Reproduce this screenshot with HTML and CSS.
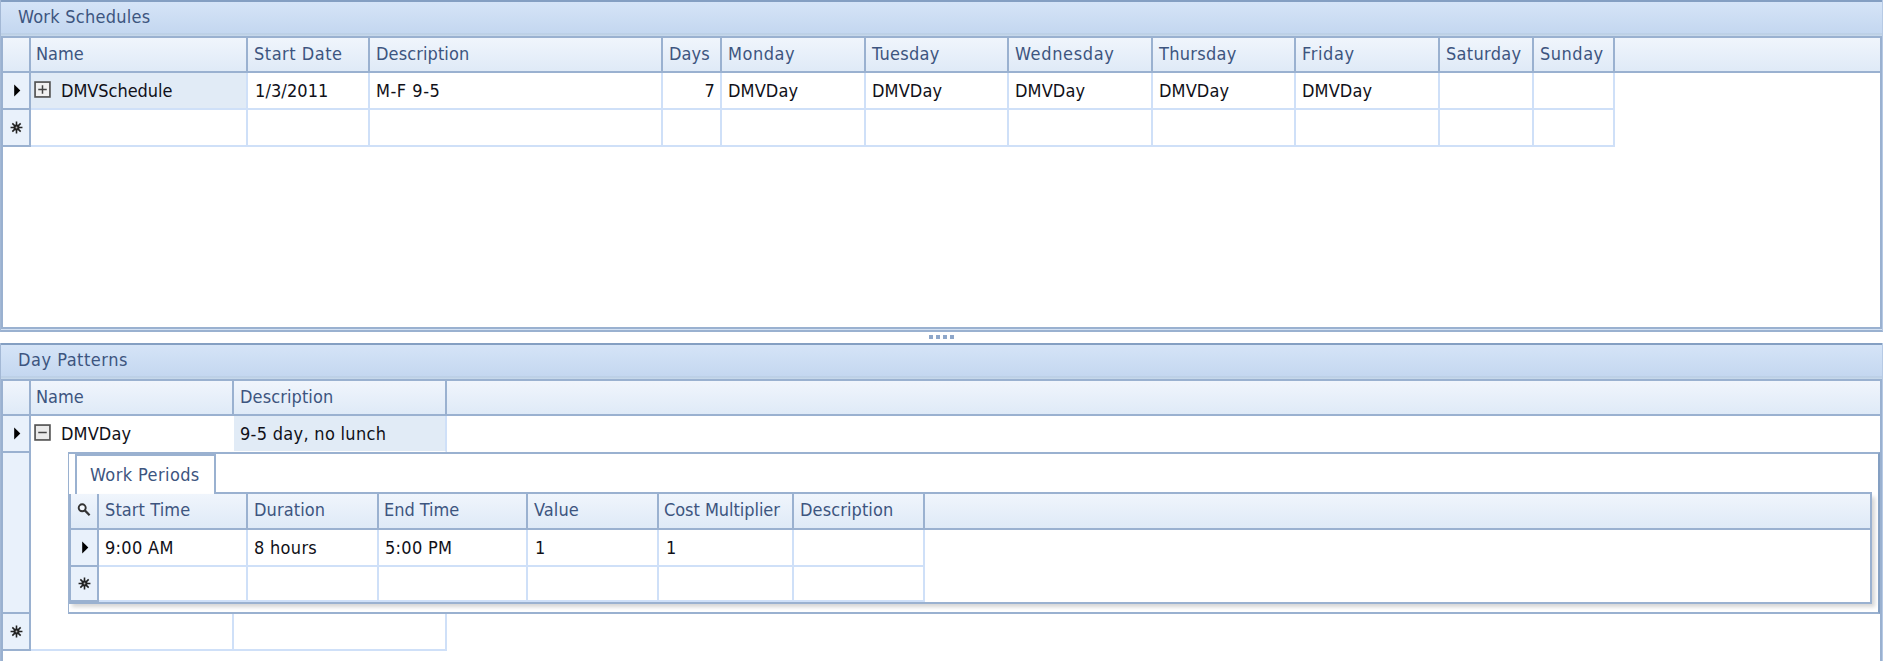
FILE: index.html
```html
<!DOCTYPE html>
<html lang="en">
<head>
<meta charset="utf-8">
<title>Work Schedules</title>
<link rel="stylesheet" href="styles.css">
</head>
<body>
<svg class="defs" aria-hidden="true">
  <symbol id="arrow" viewBox="0 0 8 14"><path d="M1 .5 7.6 7 1 13.5Z" fill="#000"/></symbol>
  <symbol id="star" viewBox="0 0 14 14"><path d="M7 .6V13.4M.6 7H13.4M2.5 2.5l9 9M11.5 2.5l-9 9" stroke="#222" stroke-width="1.7"/><circle cx="7" cy="7" r="3.2" fill="#222"/><circle cx="7" cy="7" r="1" fill="#bbb"/></symbol>
  <symbol id="lens" viewBox="0 0 14 14"><circle cx="5.2" cy="4.8" r="3.5" fill="#f4f8fd" stroke="#333" stroke-width="1.9"/><path d="m7.8 7.4 4.8 4.8" stroke="#333" stroke-width="2.2"/></symbol>
  <symbol id="plus" viewBox="0 0 16 16"><rect x="1" y="1" width="14" height="14" fill="#f1f1f1" stroke="#555" stroke-width="1.6"/><path d="M4 8h8M8 4v8" stroke="#444" stroke-width="1.4"/></symbol>
  <symbol id="minus" viewBox="0 0 16 16"><rect x="1" y="1" width="14" height="14" fill="#eaeaea" stroke="#555" stroke-width="1.6"/><path d="M4 8h8" stroke="#444" stroke-width="1.4"/></symbol>
</svg>
<main class="app">
  <section class="panel schedules">
    <h2 class="title">Work Schedules</h2>
    <div class="grid">
      <div class="row head"><div class="cell"></div><div class="cell tight">Name</div><div class="cell wide">Start Date</div><div class="cell">Description</div><div class="cell">Days</div><div class="cell wide">Monday</div><div class="cell loose">Tuesday</div><div class="cell wider">Wednesday</div><div class="cell loose">Thursday</div><div class="cell wider">Friday</div><div class="cell loose">Saturday</div><div class="cell wide">Sunday</div></div>
      <div class="row"><div class="cell mark"><svg class="arrow"><use href="#arrow"/></svg></div><div class="cell focus tree tight"><svg class="box"><use href="#plus"/></svg>DMVSchedule</div><div class="cell date">1/3/2011</div><div class="cell wide">M-F 9-5</div><div class="cell num">7</div><div class="cell">DMVDay</div><div class="cell">DMVDay</div><div class="cell">DMVDay</div><div class="cell">DMVDay</div><div class="cell">DMVDay</div><div class="cell"></div><div class="cell"></div></div>
      <div class="row"><div class="cell mark"><svg class="star"><use href="#star"/></svg></div><div class="cell"></div><div class="cell"></div><div class="cell"></div><div class="cell"></div><div class="cell"></div><div class="cell"></div><div class="cell"></div><div class="cell"></div><div class="cell"></div><div class="cell"></div><div class="cell"></div></div>
    </div>
  </section>
  <div class="splitter"><i></i><i></i><i></i><i></i></div>
  <section class="panel patterns">
    <h2 class="title wide">Day Patterns</h2>
    <div class="grid">
      <div class="row head"><div class="cell"></div><div class="cell tight">Name</div><div class="cell">Description</div></div>
      <div class="row"><div class="cell mark"><svg class="arrow"><use href="#arrow"/></svg></div><div class="cell tree plain"><svg class="box"><use href="#minus"/></svg>DMVDay</div><div class="cell focus plain loose">9-5 day, no lunch</div></div>
      <div class="expanded">
        <div class="mark rail"></div>
        <div class="detail">
          <div class="tabs"><div class="tab">Work Periods</div><div class="tabline"></div></div>
          <div class="periods">
            <div class="row head"><div class="cell mark"><svg class="lens"><use href="#lens"/></svg></div><div class="cell">Start Time</div><div class="cell">Duration</div><div class="cell tight">End Time</div><div class="cell">Value</div><div class="cell tight">Cost Multiplier</div><div class="cell">Description</div></div>
            <div class="row"><div class="cell mark"><svg class="arrow"><use href="#arrow"/></svg></div><div class="cell loose">9:00 AM</div><div class="cell loose">8 hours</div><div class="cell loose">5:00 PM</div><div class="cell one">1</div><div class="cell one">1</div><div class="cell"></div></div>
            <div class="row"><div class="cell mark"><svg class="star"><use href="#star"/></svg></div><div class="cell"></div><div class="cell"></div><div class="cell"></div><div class="cell"></div><div class="cell"></div><div class="cell"></div></div>
          </div>
        </div>
      </div>
      <div class="row"><div class="cell mark"><svg class="star"><use href="#star"/></svg></div><div class="cell"></div><div class="cell"></div></div>
    </div>
  </section>
</main>
</body>
</html>
```
FILE: styles.css
```css
* { box-sizing: border-box; }
body {
  margin: 0;
  background: #fff;
  font: 18px/22px "DejaVu Sans Condensed", "DejaVu Sans", sans-serif;
  font-stretch: condensed;
  letter-spacing: 0.1px;
  color: #101018;
  --line: #9ab1d0;
  --soft: #cfe0f8;
}
.defs { position: absolute; width: 0; height: 0; }
.app { height: 661px; overflow: hidden; display: flex; flex-direction: column; }
.panel { border-left: 1px solid #a3b8d5; border-right: 1px solid #b6cae5; background: #d3e1f3; }
.schedules { height: 332px; border-bottom: 2px solid var(--line); padding-bottom: 1px; display: flex; flex-direction: column; }
.patterns { flex: 1; display: flex; flex-direction: column; }
.title {
  margin: 0;
  height: 36px;
  flex: none;
  padding: 4px 0 0 17px;
  border-top: 2px solid #849fc2;
  background: linear-gradient(#d5e4f7, #c4d7f0 92%, #b8cce2 93%, #c9daec);
  color: #3d557f;
  font-weight: normal;
  font-size: 18px;
  line-height: 22px;
  letter-spacing: 0.25px;
}
.tight { letter-spacing: -0.05px; }
.loose { letter-spacing: 0.3px; }
.wide { letter-spacing: 0.52px; }
.wider { letter-spacing: 0.65px; }
.grid { flex: 1; border: 2px solid var(--line); background: #fff; }
.patterns .grid { border-bottom: 0; }
.row { display: grid; height: 37px; width: max-content; }
.schedules .row { grid-template-columns: 28px 217px 122px 293px 59px 144px 143px 144px 143px 144px 94px 81px; }
.patterns .row { grid-template-columns: 28px 203px 213px; }
.cell {
  border-right: 2px solid var(--soft);
  border-bottom: 2px solid var(--soft);
  padding: 7px 0 0 6px;
  white-space: nowrap;
  overflow: hidden;
}
.row.head {
  width: 100%;
  height: 35px;
  background: linear-gradient(#f0f5fc, #dfeaf7);
  border-bottom: 2px solid var(--line);
  color: #3d557f;
}
.head .cell { border-bottom: 0; border-right-color: var(--line); padding-top: 5px; }
.head .cell.tight { padding-left: 5px; }
.mark, .row .mark {
  display: flex;
  align-items: center;
  justify-content: center;
  padding: 0;
  background: #e9f1fb;
  border-right: 2px solid var(--line);
  border-bottom: 2px solid var(--line);
}
.row.head .mark { background: none; border-bottom: 0; padding: 0; }
.focus { background: #e1ebf6; }
.tree { display: flex; padding-left: 3px; gap: 10px; }
.plain { border-bottom-color: #fff; }
.tree.plain { border-right-color: #fff; }
.date, .one { padding-left: 7px; }
.num { text-align: right; padding-right: 5px; }
.box { width: 17px; height: 17px; margin-top: 1px; }
.arrow { width: 8px; height: 13px; margin-left: 2px; }
.star { width: 13px; height: 13px; }
.lens { width: 14px; height: 14px; margin-bottom: 2px; }

.splitter { height: 11px; display: flex; justify-content: center; gap: 3px; padding-top: 3px; }
.splitter i { width: 4px; height: 4px; background: #8ea7ca; }

.expanded { display: flex; height: 161px; }
.rail { width: 28px; }
.detail {
  flex: 1;
  margin-left: 37px;
  border: 2px solid var(--line);
  border-right-color: #849fc2;
  border-left-width: 1px;
  margin-top: -1px;
  padding-right: 6px;
  background: #fff;
}
.tabs { display: flex; height: 40px; padding-left: 6px; }
.tab { width: 141px; border: 2px solid var(--line); border-bottom: 0; padding: 8px 0 0 13px; color: #3d557f; letter-spacing: 0.4px; }
.tabline { flex: 1; border-bottom: 2px solid var(--line); }
.periods { border: 2px solid var(--line); border-top: 0; height: 110px; box-shadow: 3px 3px 4px #d6d6d6; }
.periods .row { grid-template-columns: 28px 149px 131px 149px 131px 135px 131px; }
.periods .row.head, .periods .row:last-child { height: 36px; }
.periods .row:last-child { height: 35px; }
```
